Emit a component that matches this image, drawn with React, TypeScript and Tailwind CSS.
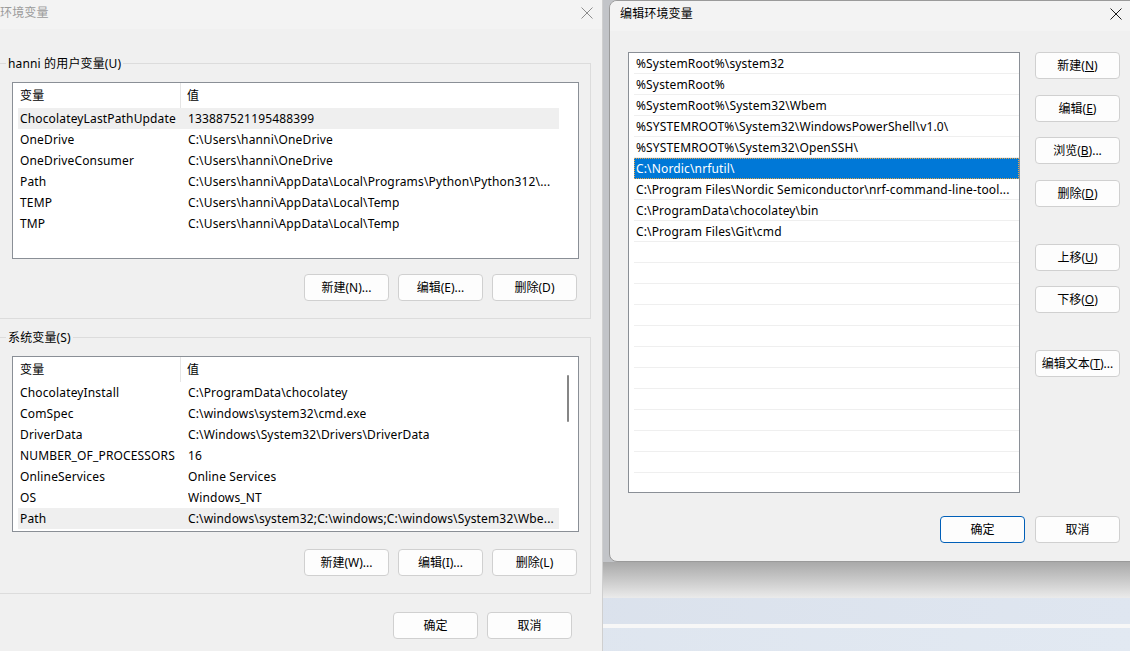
import React from "react";

// Data rows
interface VarRow {
  name: string;
  value: string;
  active?: boolean;
}

const userVars: VarRow[] = [
  { name: "ChocolateyLastPathUpdate", value: "133887521195488399", active: true },
  { name: "OneDrive", value: "C:\\Users\\hanni\\OneDrive" },
  { name: "OneDriveConsumer", value: "C:\\Users\\hanni\\OneDrive" },
  { name: "Path", value: "C:\\Users\\hanni\\AppData\\Local\\Programs\\Python\\Python312\\..." },
  { name: "TEMP", value: "C:\\Users\\hanni\\AppData\\Local\\Temp" },
  { name: "TMP", value: "C:\\Users\\hanni\\AppData\\Local\\Temp" },
];

const systemVars: VarRow[] = [
  { name: "ChocolateyInstall", value: "C:\\ProgramData\\chocolatey" },
  { name: "ComSpec", value: "C:\\windows\\system32\\cmd.exe" },
  { name: "DriverData", value: "C:\\Windows\\System32\\Drivers\\DriverData" },
  { name: "NUMBER_OF_PROCESSORS", value: "16" },
  { name: "OnlineServices", value: "Online Services" },
  { name: "OS", value: "Windows_NT" },
  { name: "Path", value: "C:\\windows\\system32;C:\\windows;C:\\windows\\System32\\Wbe...", active: true },
];

const pathEntries: string[] = [
  "%SystemRoot%\\system32",
  "%SystemRoot%",
  "%SystemRoot%\\System32\\Wbem",
  "%SYSTEMROOT%\\System32\\WindowsPowerShell\\v1.0\\",
  "%SYSTEMROOT%\\System32\\OpenSSH\\",
  "C:\\Nordic\\nrfutil\\",
  "C:\\Program Files\\Nordic Semiconductor\\nrf-command-line-tool...",
  "C:\\ProgramData\\chocolatey\\bin",
  "C:\\Program Files\\Git\\cmd",
];

const CloseIcon = ({ color }: { color: string }) => (
  <svg width="12" height="12" viewBox="0 0 12 12" fill="none">
    <path d="M0.5 0.5 L11.5 11.5 M11.5 0.5 L0.5 11.5" stroke={color} strokeWidth="1" />
  </svg>
);

const Btn = ({
  children,
  className = "",
}: {
  children: React.ReactNode;
  className?: string;
}) => (
  <button
    className={`flex h-[27px] w-[85px] shrink-0 items-center justify-center rounded-[4px] border bg-[#fdfdfd] text-[12px] leading-none tracking-normal text-black ${className}`}
  >
    {children}
  </button>
);

// Two-column list view used in the left dialog
const VarList = ({
  rows,
  height,
  scrollbar,
}: {
  rows: VarRow[];
  height: string;
  scrollbar?: boolean;
}) => (
  <div className={`flex w-[567px] border border-[#8a8f96] bg-white ${height}`}>
    <div className="ml-[5px] flex w-[541px] flex-col">
      <div className="flex h-[25px] shrink-0 items-center">
        <div className="flex h-full w-[163px] items-center border-r border-[#e5e5e5] pl-[2px]">变量</div>
        <div className="pl-[6px]">值</div>
      </div>
      {rows.map((r) => (
        <div
          key={r.name}
          className={`flex h-[21px] shrink-0 items-center whitespace-nowrap ${r.active ? "bg-[#efefef]" : ""}`}
        >
          <div className="w-[170px] pl-[2px]">{r.name}</div>
          <div className="overflow-hidden">{r.value}</div>
        </div>
      ))}
    </div>
    {scrollbar && (
      <div className="ml-auto flex w-[19px] flex-col pt-[18px]">
        <div className="ml-[8px] h-[47px] w-[2px] rounded-full bg-[#868686]" />
      </div>
    )}
  </div>
);

const GroupBox = ({
  label,
  className,
  children,
}: {
  label: string;
  className: string;
  children: React.ReactNode;
}) => (
  <div className={`relative -ml-[4px] w-[595px] border border-[#dcdcdc] pl-[15px] pt-[18px] ${className}`}>
    <span className="absolute -top-[8px] left-[9px] bg-[#f0f0f0] px-[2px] leading-[16px]">{label}</span>
    {children}
  </div>
);

const App = () => {
  return (
    <div className="relative h-[651px] w-[1130px] overflow-hidden font-['Noto_Sans','Noto_Sans_CJK_SC',sans-serif] text-[12px] tracking-[0.15px] text-black">
      {/* desktop behind the windows */}
      <div className="flex h-full flex-col">
        <div className="h-[562px] bg-[#c2c4c8]" />
        <div className="h-[36px] bg-gradient-to-b from-[#a9a9a9] to-[#ebebeb]" />
        <div className="h-[26px] bg-gradient-to-r from-[#d6dde8] to-[#dfe6f0]" />
        <div className="h-[4px] bg-[#f7f7f7]" />
        <div className="flex-1 bg-gradient-to-r from-[#dbe2ec] to-[#e2e9f2]" />
      </div>

      {/* Environment variables dialog (inactive) */}
      <div className="absolute left-0 top-0 h-[651px] w-[603px] overflow-hidden border-r border-[#cfcfcf] bg-[#f0f0f0]">
        <div className="flex h-[29px] items-center justify-between bg-[#f3f3f3] pb-[4px] pr-[9px]">
          <span className="text-[#9b9b9b]">环境变量</span>
          <CloseIcon color="#8c8c8c" />
        </div>

        <GroupBox label="hanni 的用户变量(U)" className="mt-[34px] h-[256px]">
          <VarList rows={userVars} height="h-[177px]" />
          <div className="mt-[15px] flex w-[567px] justify-end gap-[9px] pr-[2px]">
            <Btn className="border-[#d0d0d0]">新建(N)...</Btn>
            <Btn className="border-[#d0d0d0]">编辑(E)...</Btn>
            <Btn className="border-[#d0d0d0]">删除(D)</Btn>
          </div>
        </GroupBox>

        <GroupBox label="系统变量(S)" className="mt-[18px] h-[257px]">
          <VarList rows={systemVars} height="h-[176px]" scrollbar />
          <div className="mt-[17px] flex w-[567px] justify-end gap-[9px] pr-[2px]">
            <Btn className="border-[#d0d0d0]">新建(W)...</Btn>
            <Btn className="border-[#d0d0d0]">编辑(I)...</Btn>
            <Btn className="border-[#d0d0d0]">删除(L)</Btn>
          </div>
        </GroupBox>

        <div className="mt-[18px] flex justify-end gap-[9px] pr-[30px]">
          <Btn className="border-[#d0d0d0]">确定</Btn>
          <Btn className="border-[#d0d0d0]">取消</Btn>
        </div>
      </div>

      {/* Edit environment variable dialog (active) */}
      <div className="absolute left-[609px] top-0 h-[562px] w-[540px] overflow-hidden rounded-[8px] border border-[#9a9a9a] bg-[#f0f0f0]">
        <div className="flex h-[30px] items-center justify-between bg-[#f3f3f3] pb-[4px] pl-[10px] pr-[26px]">
          <span>编辑环境变量</span>
          <CloseIcon color="#1a1a1a" />
        </div>

        <div className="ml-[18px] mt-[21px] flex gap-[15px]">
          <div className="flex h-[441px] w-[392px] flex-col overflow-hidden border border-[#8a8f96] bg-white pl-[5px]">
            {Array.from({ length: 21 }).map((_, i) => {
              const text = pathEntries[i];
              const selected = i === 5;
              return (
                <div
                  key={i}
                  className={`flex h-[21px] shrink-0 items-center overflow-hidden whitespace-nowrap border-b pl-[2px] pt-[1px] ${
                    selected
                      ? "border-[#0078d7] bg-[#0078d7] text-white outline-1 -outline-offset-1 outline-dotted outline-[#e9a646]"
                      : "border-[#efefef]"
                  }`}
                >
                  {text ?? ""}
                </div>
              );
            })}
          </div>

          <div className="flex w-[85px] flex-col">
            <Btn className="border-[#d0d0d0]">新建(<u>N</u>)</Btn>
            <Btn className="mt-[16px] border-[#d0d0d0]">编辑(<u>E</u>)</Btn>
            <Btn className="mt-[15px] border-[#d0d0d0]">浏览(<u>B</u>)...</Btn>
            <Btn className="mt-[16px] border-[#d0d0d0]">删除(<u>D</u>)</Btn>
            <Btn className="mt-[37px] border-[#d0d0d0]">上移(<u>U</u>)</Btn>
            <Btn className="mt-[15px] border-[#d0d0d0]">下移(<u>O</u>)</Btn>
            <Btn className="mt-[37px] border-[#d0d0d0]">编辑文本(<u>T</u>)...</Btn>
          </div>
        </div>

        <div className="ml-[330px] mt-[23px] flex gap-[10px]">
          <Btn className="border-[#005fb8]">确定</Btn>
          <Btn className="border-[#d0d0d0]">取消</Btn>
        </div>
      </div>
    </div>
  );
};

export default App;
